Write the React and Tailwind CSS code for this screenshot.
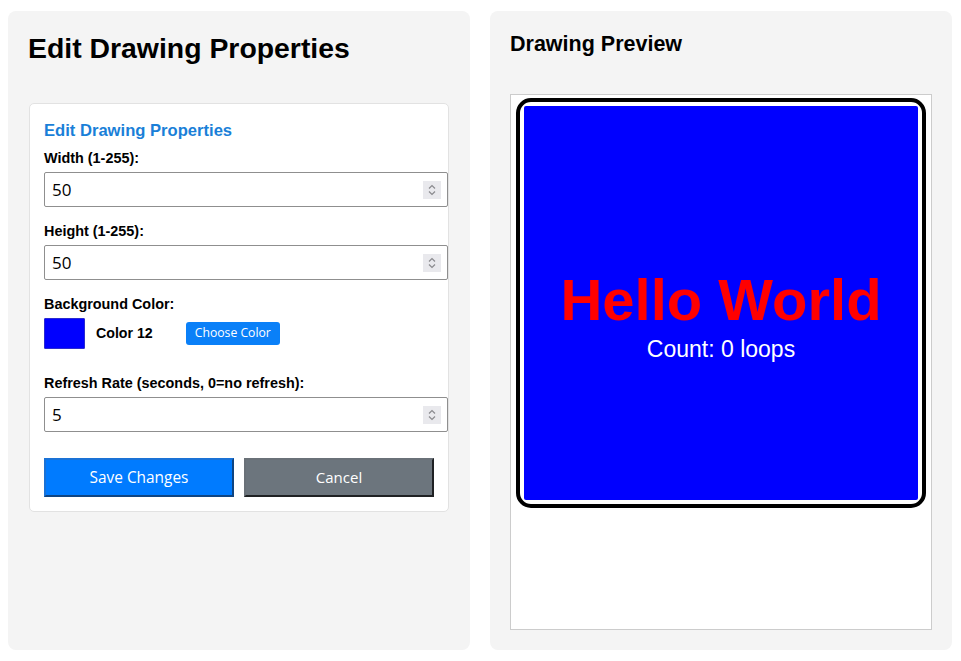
import React from "react";

const arial = { fontFamily: '"Liberation Sans", Arial, sans-serif' };

function Spinner() {
  return (
    <span className="absolute right-[6px] top-1/2 -translate-y-1/2 w-[18px] h-[18px] bg-[#e9e9ed] flex items-center justify-center">
      <svg width="10" height="14" viewBox="0 0 10 14" fill="none" stroke="#8a8a8e" strokeWidth="1.2">
        <path d="M2 5.5 L5 2.5 L8 5.5" />
        <path d="M2 8.5 L5 11.5 L8 8.5" />
      </svg>
    </span>
  );
}

function NumberField({ label, value, top }) {
  return (
    <div className={top}>
      <label className="block text-[14.4px] leading-[17px] font-bold text-black">{label}</label>
      <div className="relative mt-[5px] w-[404px] h-[35px] border border-[#8f8f8f] rounded-[2px] bg-white flex items-center pl-[7px]">
        <span className="text-[17px] text-black font-['Open_Sans',sans-serif]">{value}</span>
        <Spinner />
      </div>
    </div>
  );
}

export default function App() {
  return (
    <div className="w-[961px] h-[661px] bg-white flex gap-[20px] px-[8px] py-[11px]" style={arial}>
      {/* Left: form panel */}
      <div className="w-[462px] bg-[#f4f4f4] rounded-[8px] pt-[21px] px-[20px]">
        <h1 className="text-[28.4px] leading-[32px] font-bold text-black">Edit Drawing Properties</h1>

        <div className="mt-[39px] ml-[1px] w-[420px] bg-white border border-[#e2e2e2] rounded-[5px] pt-[17px] pb-[14px] px-[14px]">
          <h3 className="text-[16.6px] leading-[20px] font-bold text-[#1a7fd8]">Edit Drawing Properties</h3>

          <NumberField label="Width (1-255):" value="50" top="mt-[9px]" />
          <NumberField label="Height (1-255):" value="50" top="mt-[16px]" />

          <div className="mt-[16px]">
            <label className="block text-[14.4px] leading-[17px] font-bold text-black">Background Color:</label>
            <div className="mt-[5px] flex items-center h-[31px]">
              <div className="w-[41px] h-[31px] bg-[#0000ff] border border-[#2b2bd0] rounded-[1px]" />
              <span className="ml-[11px] text-[14.2px] font-bold text-black">Color 12</span>
              <button className="ml-[33px] h-[23px] px-[9px] rounded-[3px] bg-[#0a80f8] text-white text-[12.2px] font-['Open_Sans',sans-serif]">
                Choose Color
              </button>
            </div>
          </div>

          <NumberField label="Refresh Rate (seconds, 0=no refresh):" value="5" top="mt-[26px]" />

          <div className="mt-[26px] flex gap-[10px]">
            <button className="w-[190px] h-[39px] bg-[#007bff] border-2 [border-style:outset] border-[#1a72d6] text-white text-[15.4px] font-['Open_Sans',sans-serif]">
              Save Changes
            </button>
            <button className="w-[190px] h-[39px] bg-[#6c757d] border-2 [border-style:outset] border-[#6a7178] text-white text-[15px] font-['Open_Sans',sans-serif]">
              Cancel
            </button>
          </div>
        </div>
      </div>

      {/* Right: preview panel */}
      <div className="w-[462px] bg-[#f4f4f4] rounded-[8px] pt-[20px] px-[20px] pb-[20px] flex flex-col">
        <h2 className="text-[21.5px] leading-[26px] font-bold text-black">Drawing Preview</h2>
        <div className="mt-[37px] flex-1 bg-white border border-[#cccccc] pt-[3px] pl-[5px]">
          <div className="w-[410px] h-[410px] border-[4px] border-black rounded-[15px] p-[4px]">
            <div className="w-full h-full bg-[#0000ff] rounded-[2px] flex flex-col items-center justify-center pt-[26px]">
              <div className="text-[58px] leading-[58px] font-bold text-[#ff0000]">Hello World</div>
              <div className="mt-[9px] text-[23px] leading-[23px] text-white">Count: 0 loops</div>
            </div>
          </div>
        </div>
      </div>
    </div>
  );
}
